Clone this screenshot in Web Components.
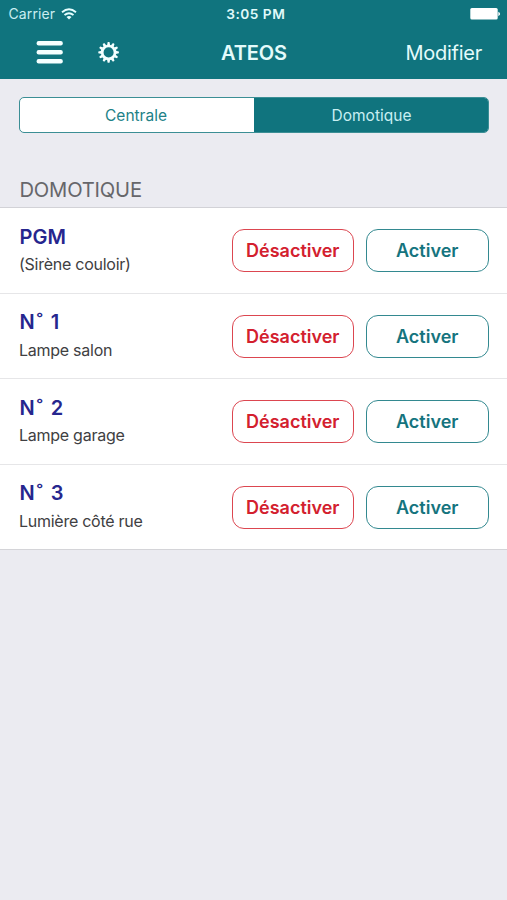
<!DOCTYPE html>
<html lang="fr">
<head>
<meta charset="utf-8">
<title>ATEOS</title>
<style>
body { margin: 0; background: #ebebf1; font-family: Inter, "Liberation Sans", sans-serif; }
</style>
</head>
<body>
<ateos-app></ateos-app>
<script>
const define = (name, html) => customElements.define(name, class extends HTMLElement {
  constructor() {
    super();
    const t = document.createElement('template');
    t.innerHTML = html;
    this.attachShadow({ mode: 'open' }).append(t.content.cloneNode(true));
  }
});

define('status-bar', `
<style>
:host { display: grid; grid-template-columns: 1fr auto 1fr; align-items: center; height: 27px; padding: 0 6px 0 8.5px; box-sizing: border-box; color: #fff; font-size: 14px; line-height: 27px; }
.l { display: flex; align-items: center; gap: 6px; color: #c9eef1; letter-spacing: .12px; }
.c { font-size: 13.7px; font-weight: 600; color: #e0fafa; letter-spacing: .5px; padding: 1px 0 0 2px; }
.r { justify-self: end; }
svg { display: block; }
.l { margin-top: -1px; }
</style>
<div class="l"><span>Carrier</span>
<svg width="16" height="12" viewBox="0 0 16 12" fill="none" stroke="#e6ffff" stroke-width="1.9"><path d="M1 4.2Q8-1.5 15 4.2M3.5 7Q8 3.4 12.5 7"/><path d="M5.5 9Q8 7 10.5 9L8 11.6Z" fill="#e6ffff" stroke="none"/></svg></div>
<div class="c">3:05 PM</div>
<div class="r"><svg width="31" height="12" viewBox="0 0 31 12" fill="#fff"><rect x="0.3" y="0" width="27.4" height="11.6" rx="1.5"/><path d="M28.3 3.8Q32 6 28.3 8.2Z"/></svg></div>
`);

define('nav-bar', `
<style>
:host { display: grid; grid-template-columns: 1fr auto 1fr; align-items: center; height: 52px; padding: 0 25px; box-sizing: border-box; color: #e4fbfb; font-size: 20px; line-height: 52px; }
.icons { display: flex; align-items: center; gap: 34.5px; padding-left: 11px; margin-top: -1px; }
.t { font-weight: 600; letter-spacing: -.1px; padding-left: 1px; }
.r { justify-self: end; letter-spacing: -.25px; }
svg { display: block; }
</style>
<div class="icons">
<svg width="27" height="23" viewBox="0 0 27 23" fill="#f4ffff"><rect x=".6" y="0" width="26.2" height="4.6" rx="2"/><rect x=".6" y="9" width="26.2" height="4.6" rx="2"/><rect x=".6" y="18" width="26.2" height="4.6" rx="2"/></svg>
<svg width="22" height="22" viewBox="-10.6 -10.4 22 22" fill="none" stroke="#f4ffff"><circle r="6.4" stroke-width="2.7"/><g id="teeth" stroke="none" fill="#f4ffff"></g></svg>
</div>
<div class="t">ATEOS</div>
<div class="r"><slot></slot></div>
`);

define('segment-control', `
<style>
:host { display: grid; grid-template-columns: 234px 1fr; height: 36px; margin: 18px 18px 0 19px; box-sizing: border-box; border: 1.4px solid #3b8e95; border-radius: 5px; overflow: hidden; background: #fff; font-size: 15.5px; line-height: 35.5px; text-align: center; color: #218187; }
.off { padding-right: 2px; }
.on { background: #10747e; color: #c8eff2; margin: -1px -1px -1px 0; line-height: 37.5px; }
</style>
<div class="off"><slot name="off"></slot></div><div class="on"><slot name="on"></slot></div>
`);

define('section-title', `
<style>
:host { display: block; height: 75px; box-sizing: border-box; padding: 44px 20px 0 19.5px; font-size: 20.2px; line-height: 26px; color: #66666a; letter-spacing: -.2px; border-bottom: 1px solid #d2d2d7; }
</style><slot></slot>
`);

define('pill-button', `
<style>
:host { display: block; width: 122.5px; height: 43px; box-sizing: border-box; border: 1.4px solid #338990; border-radius: 12px; color: #15747e; font-size: 18px; font-weight: 600; line-height: 41px; text-align: center; }
:host([kind="off"]) { border-color: #dc4650; color: #d3202e; }
</style><slot></slot>
`);

define('device-row', `
<style>
:host { display: flex; align-items: flex-start; gap: 12px; height: 85.5px; box-sizing: border-box; padding: 21px 18.5px 0 19px; background: #fff; border-bottom: 1.5px solid #e6e6e8; }
:host(:last-of-type) { border-bottom-color: #d4d4d8; }
.txt { flex: 1; }
.n { margin-top: -5.3px; padding-left: .6px; font-size: 20px; line-height: 26px; font-weight: 600; color: #26268e; }
:host([numbered]) .n { letter-spacing: 1.4px; }
.d { margin-top: 1.5px; font-size: 16px; line-height: 26px; color: #404042; letter-spacing: -.26px; }
</style>
<div class="txt"><div class="n"><slot name="name"></slot></div><div class="d"><slot></slot></div></div>
<pill-button kind="off">Désactiver</pill-button><pill-button>Activer</pill-button>
`);

define('ateos-app', `
<style>
:host { display: block; width: 507px; height: 900px; overflow: hidden; background: #ebebf1; }
header { height: 79px; background: #10747e; }
</style>
<header><status-bar></status-bar><nav-bar>Modifier</nav-bar></header>
<segment-control><span slot="off">Centrale</span><span slot="on">Domotique</span></segment-control>
<section-title>DOMOTIQUE</section-title>
<device-row><span slot="name">PGM</span>(Sirène couloir)</device-row>
<device-row numbered><span slot="name">N˚ 1</span>Lampe salon</device-row>
<device-row numbered><span slot="name">N˚ 2</span>Lampe garage</device-row>
<device-row numbered><span slot="name">N˚ 3</span>Lumière côté rue</device-row>
`);

// Twelve gear teeth spaced evenly around the ring.
const nav = document.querySelector('ateos-app').shadowRoot.querySelector('nav-bar').shadowRoot;
for (let i = 0; i < 12; i++) {
  const p = document.createElementNS('http://www.w3.org/2000/svg', 'path');
  p.setAttribute('d', 'M-1.6-7L-.9-10.3H.9L1.6-7Z');
  p.setAttribute('transform', `rotate(${i * 30})`);
  nav.getElementById('teeth').append(p);
}
</script>
</body>
</html>
